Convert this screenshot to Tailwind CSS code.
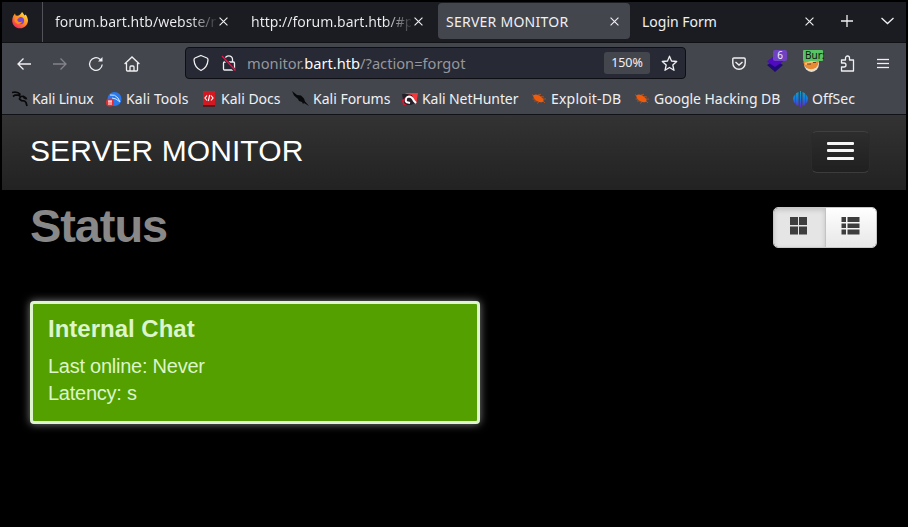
<!DOCTYPE html>
<html lang="en">
<head>
<meta charset="utf-8">
<title>SERVER MONITOR</title>
<script src="https://cdn.jsdelivr.net/npm/@tailwindcss/browser@4"></script>
</head>
<body class="h-[527px] w-[908px] overflow-hidden bg-black p-[2px] font-['Noto_Sans',sans-serif] text-[14px] text-[#f0f0f2]">
<svg class="hidden">
  <defs>
    <symbol id="close" viewBox="0 0 8 8"><path d="M.5.5l7 7M7.500.5l-7 7" stroke="currentColor" stroke-width="1"/></symbol>
    <symbol id="dragon" viewBox="0 0 16 16"><path d="M0 1.500l3-.5 3 .7 2.500 2M1 5.500l2-1.500 3.500.2 2 1.300 3-.2 3 2.700M8.500 5.500L7.500 8l2 1.700 3 .3 1.500 1.500 1 3.500" fill="none" stroke="#08090b" stroke-width="1.700"/><path d="M11 5l3 1 1.500 2.500-4-1z" fill="#08090b"/></symbol>
    <symbol id="bug" viewBox="0 0 16 14"><path d="M2.500 3.200c2.500-1.500 5.500-.2 7.500 1.500 2.500 1.800 3.500 4 1.500 5.200s-6.500-.7-8-3-1.500-3.200-1-3.700z" fill="#ed5b0c"/><path d="M3 4L1 2.500M4 7L1.500 7M6 9l-3 0M8 10l-2 1.500M7 3l3-.8M10 4.500l3 .5M12 7l3 0M12 9l2 2" stroke="#ed5b0c" stroke-width=".8" stroke-opacity=".7"/></symbol>
  </defs>
</svg>
<div class="h-[523px] w-[904px]">
  <header class="h-[113px] border-b border-[#111218] bg-[#44464e]">
    <div class="flex h-[41px] border-b border-[#101115] bg-[#1b1c22]">
      <div class="flex w-[41px] shrink-0 justify-center border-r border-[#52535a] pr-[4px] pt-[10px]">
        <svg width="17" height="17" viewBox="0 0 17 17"><defs><linearGradient id="ff" x1=".9" y1="0" x2=".2" y2="1"><stop stop-color="#fff044"/><stop offset=".45" stop-color="#ff9725"/><stop offset="1" stop-color="#f5205e"/></linearGradient></defs><path d="M1.500 3.500L3 1.500l.7 2 2 .3C8 3 9 2 10 0c1 1 2 2.500 2.500 3.500l1-1c2.800 3 3.300 7.500 1 10.500-3 4-9 4.500-12.200 1C-.3 11-.3 7 1.500 3.500z" fill="url(#ff)"/><circle cx="8.500" cy="8.700" r="3.600" fill="#7546cf"/><path d="M3 5c2-1 4 0 5 1-2 .3-3 1-2.500 2.500 1 2 4 2 5 0-1 5-7 4-8 0z" fill="#ff8c1f"/></svg>
      </div>
      <div class="flex w-[193px] shrink-0 pl-[12px] pt-[10px]"><span class="w-[161px] whitespace-nowrap bg-linear-to-r from-[#f0f0f2] from-84% to-[#f0f0f2]/10 to-100% bg-clip-text leading-5 text-transparent">forum.bart.htb/webste/n</span><svg class="ml-[3px] mt-[5px] size-[9px] shrink-0"><use href="#close"/></svg></div>
      <div class="flex w-[202px] shrink-0 pl-[15px] pt-[10px]"><span class="w-[160px] whitespace-nowrap bg-linear-to-r from-[#f0f0f2] from-84% to-[#f0f0f2]/10 to-100% bg-clip-text leading-5 text-transparent">http://forum.bart.htb/#p</span><svg class="ml-[3px] mt-[5px] size-[9px] shrink-0"><use href="#close"/></svg></div>
      <div class="mt-[1px] flex h-[36px] w-[192px] shrink-0 justify-between rounded-[4px] bg-[#44464e] pl-[8px] pr-[11px] pt-[9px]"><span class="leading-5 tracking-[0.25px]">SERVER MONITOR</span><svg class="mt-[5px] size-[9px]"><use href="#close"/></svg></div>
      <div class="flex w-[184px] shrink-0 justify-between pl-[12px] pt-[10px]"><span class="leading-5">Login Form</span><svg class="mt-[5px] size-[9px]"><use href="#close"/></svg></div>
      <svg class="ml-[27px] mt-[13px]" width="12" height="12" fill="none" stroke="#f0f0f2" stroke-width="1.300"><path d="M6 0v12M0 6h12"/></svg>
      <svg class="ml-[28px] mt-[15px]" width="13" height="8" fill="none" stroke="#f0f0f2" stroke-width="1.300"><path d="M.5 1l6 5.500 6-5.500"/></svg>
    </div>
    <div class="flex h-[41px] items-center">
      <svg class="ml-[15px]" width="14" height="14" fill="none" stroke="#f0f0f2" stroke-width="1.300"><path d="M14 7H1M6.500 1.500L1 7l5.500 5.500"/></svg>
      <svg class="ml-[22px]" width="14" height="14" fill="none" stroke="#83848a" stroke-width="1.300"><path d="M0 7h13M7.500 1.500L13 7l-5.500 5.500"/></svg>
      <svg class="ml-[21px]" width="16" height="16" fill="none" stroke="#f0f0f2" stroke-width="1.300"><path d="M14.200 8.500A6.300 6.300 0 1 1 12 3.200l1 1"/><path d="M14.500 1v4.500H10z" fill="#f0f0f2" stroke="none"/></svg>
      <svg class="ml-[20px]" width="16" height="16" fill="none" stroke="#f0f0f2" stroke-width="1.300"><path d="M.6 8L8 1l7.400 7M2.500 7v7q0 1 1 1h9q1 0 1-1V7M6 15v-4q0-1 1-1h2q1 0 1 1v4"/></svg>
      <div class="-mt-[1px] ml-[45px] flex h-[32px] w-[501px] items-center rounded-[4px] border border-[#0e0f14] bg-[#272934]">
        <svg class="ml-[7px]" width="16" height="18" fill="none" stroke="#f0f0f2" stroke-width="1.300"><path d="M8 1.500L14 4Q15 4.500 15 6Q14.500 13.500 8 16.500Q1.500 13.500 1 6Q1 4.500 2 4Z"/></svg>
        <svg class="ml-[12px]" width="16" height="18" fill="none" stroke="#f0f0f2" stroke-width="1.300"><path d="M4 8V5a3.800 3.800 0 0 1 7.500 0v3M3.500 8h9q1 0 1 1v6q0 1-1 1h-9q-1 0-1-1V9q0-1 1-1z"/><path d="M1 2l13 14.500" stroke="#272934" stroke-width="3"/><path d="M1 2l13.500 14.500" stroke="#e5164b" stroke-width="1.300"/></svg>
        <span class="ml-[10px] whitespace-nowrap text-[14.670px] text-[#96979d]">monitor.<span class="text-[#fbfbfe]">bart.htb</span>/?action=forgot</span>
        <span class="ml-auto flex h-[22px] w-[46px] items-center justify-center rounded-[3px] bg-[#44464e] text-[12.500px] tracking-[-0.1px]">150%</span>
        <svg class="ml-[11px] mr-[7px]" width="17" height="17" fill="none" stroke="#f0f0f2" stroke-width="1.300" stroke-linejoin="round"><path d="M8.500 1.200l2 4.800 5.200.5-3.900 3.500 1.200 5.300-4.500-2.800-4.500 2.800L5.200 10 1.300 6.500 6.500 6z"/></svg>
      </div>
      <svg class="-mt-[1px] ml-[46px]" width="14" height="13" fill="none" stroke="#f0f0f2" stroke-width="1.400"><path d="M2 1h10q1.200 0 1.200 1.200V6a6.200 6.200 0 0 1-12.400 0V2.200Q.8 1 2 1zM3.500 5L7 8l3.500-3"/></svg>
      <div class="relative ml-[21px] h-[22px] w-[20px]">
        <svg width="17" height="22"><path d="M0 12l8-5 8 5-8 7z" fill="#210a78"/><path d="M0 8.500L8 2l8 6.500L8 14z" fill="#4f0bc0"/></svg>
        <span class="absolute -top-[3px] left-[6px] flex h-[11px] w-[14px] items-center justify-center rounded-[2px] bg-[#6f42c1] text-[10px] leading-none">6</span>
      </div>
      <div class="relative ml-[16px] h-[22px] w-[20px]">
        <svg width="17" height="22"><ellipse cx="8.500" cy="10.500" rx="7.500" ry="8.500" fill="#e8ded0"/><ellipse cx="8" cy="9.300" rx="7.500" ry="7" fill="#e98b30"/><path d="M2 11l12-4" stroke="#f5c27a" stroke-width="2"/><path d="M4 11h4M10 9.500h3" stroke="#703e20"/></svg>
        <span class="absolute -top-[3px] left-0 flex h-[11px] w-[20px] items-center rounded-[1px] bg-[#57c563] pl-[2px] text-[10px] leading-none text-[#10140f]">Bur:</span>
      </div>
      <svg class="ml-[17px]" width="16" height="17" fill="none" stroke="#f0f0f2" stroke-width="1.300" stroke-linejoin="round"><path d="M1.500 5h4V3a2 2 0 0 1 4 0v2h4v11h-12v-4H4a2 2 0 0 0 0-4H1.500z"/></svg>
      <svg class="-mt-[1px] ml-[21px]" width="12" height="11" fill="#f0f0f2"><path d="M0 1h12v1H0zM0 5h12v1H0zM0 9h12v1H0z" stroke="#f0f0f2" stroke-width=".3"/></svg>
    </div>
    <div class="grid h-[29px] grid-cols-[94px_95px_91px_110px_129px_103px_159px_80px] items-center pl-[10px] text-[#f0f0f2] [&>div]:flex [&>div]:items-center [&>div]:gap-[4px] [&>div]:whitespace-nowrap">
      <div class="tracking-[-0.15px]"><svg width="16" height="16"><use href="#dragon"/></svg>Kali Linux</div>
      <div class="tracking-[0.1px]"><svg width="16" height="16" viewBox="0 0 16 16"><circle cx="8.500" cy="8" r="7" fill="#2878ee"/><path d="M4 4q5-1 8 3l2 4Q10 7 6 7" fill="none" stroke="#d5e8ff"/><circle cx="4" cy="11.500" r="4" fill="#e52e31"/><path d="M2 10h4M3 10v4M5 10v4" stroke="#fff"/></svg>Kali Tools</div>
      <div><svg width="16" height="16" viewBox="0 0 16 16"><path d="M2 0h12v16H2z" fill="#d21921"/><path d="M2 14h12v2H2z" fill="#4d1d24"/><path d="M6 4.500L4 7l2 2.500M10 4.500L12 7l-2 2.500M8.700 4L7.300 10" fill="none" stroke="#fff" stroke-width="1.200"/></svg>Kali Docs</div>
      <div><svg width="17" height="16" viewBox="0 0 17 16"><path d="M0 0l5 4 4 .5 3 3 1 3 4 4.500-5-3-1 1-1-2-3-1-1-2-4-3.500z" fill="#08090b"/></svg>Kali Forums</div>
      <div class="tracking-[-0.07px]"><svg width="16" height="16" viewBox="0 0 16 16"><path d="M3 2h13l-2 12-4-7z" fill="#f5383b"/><path d="M0 3h5l5 1 3 8-4 2H3L1 9z" fill="#24202a"/><path d="M0 9l3-2-1 5 3 2-4 0z" fill="#e1122c"/><path d="M4 11q-1-5 3-5.500 3 0 5 4.500l2 2M4 11l4 1" fill="none" stroke="#fff" stroke-width="2"/></svg>Kali NetHunter</div>
      <div class="tracking-[0.2px]"><svg width="16" height="14"><use href="#bug"/></svg>Exploit-DB</div>
      <div class="tracking-[-0.05px]"><svg width="16" height="14"><use href="#bug"/></svg>Google Hacking DB</div>
      <div><svg width="15" height="16"><defs><linearGradient id="os" x2="0" y2="1"><stop stop-color="#0ea5bd"/><stop offset=".5" stop-color="#1577df"/><stop offset="1" stop-color="#6328c5"/></linearGradient></defs><path d="M2.500 3v10Q-2.500 8 2.500 3zM3 2.200L5.500 1v14L3 13.700zM7 0h1v16H7zM9.500 1L12 2.200v11.500L9.500 15zM12.500 3q5 5 0 10z" fill="url(#os)"/></svg>OffSec</div>
    </div>
  </header>
  <main class="font-['Liberation_Sans',sans-serif]">
    <nav class="flex h-[75px] items-start justify-between bg-linear-to-b from-[#333333] to-[#222222] pl-[28px] pr-[36px]">
      <h1 class="mt-[18px] text-[30px] leading-9 tracking-[0.08px] text-white">SERVER MONITOR</h1>
      <button aria-label="Menu" class="mt-[16px] flex h-[42px] w-[59px] flex-col items-center rounded-[6px] border border-x-[#2b2b2b] border-t-[#404040] border-b-[#3c3c3c] bg-linear-to-b from-[#2d2d2d] to-[#202020] pt-[10px]">
        <span class="h-[3px] w-[27px] rounded-[1px] bg-[#f6f6f6]"></span><span class="mt-[4px] h-[3px] w-[27px] rounded-[1px] bg-[#f6f6f6]"></span><span class="mt-[5px] h-[3px] w-[27px] rounded-[1px] bg-[#f6f6f6]"></span>
      </button>
    </nav>
    <div class="flex justify-between pl-[28px] pr-[29px]">
      <h2 class="mt-[6px] text-[47px] font-bold leading-[60px] tracking-[-1.1px] text-[#888888]">Status</h2>
      <div class="mt-[17px] flex h-[41px] w-[104px] overflow-hidden rounded-[5px] border border-[#c7c7c7]">
        <div class="w-[52px] border-r border-[#c3c3c3] bg-[#e5e5e5] pl-[16px] pt-[9px] shadow-[inset_0_2px_5px_rgba(0,0,0,0.16)]"><svg width="17" height="18" fill="#3d3d3d"><path d="M0 0h8v8H0zM9 0h8v8H9zM0 9.500h8v8H0zM9 9.500h8v8H9z"/></svg></div>
        <div class="flex-1 bg-linear-to-b from-white to-[#e7e7e7] pl-[15px] pt-[9px]"><svg width="19" height="18" fill="#3d3d3d"><path d="M.5 0h4.500v5H.5zM6.500 0h12v5h-12zM.5 6.500h4.500v4.500H.5zM6.500 6.500h12v4.500h-12zM.5 12.500h4.500v5H.5zM6.500 12.500h12v5h-12z"/></svg></div>
      </div>
    </div>
    <section class="ml-[28px] mt-[45px] h-[123px] w-[450px] rounded-[4px] border-[3px] border-[#dff5d0] bg-[#54a000] pl-[15px] text-[#dcf5ca] shadow-[0_0_9px_rgba(255,255,255,0.5)]">
      <h3 class="mt-[9px] text-[24px] font-bold leading-[32px]">Internal Chat</h3>
      <p class="mt-[8px] text-[20px] leading-[27px] tracking-[-0.25px]">Last online: Never<br>Latency: s</p>
    </section>
  </main>
</div>
</body>
</html>
